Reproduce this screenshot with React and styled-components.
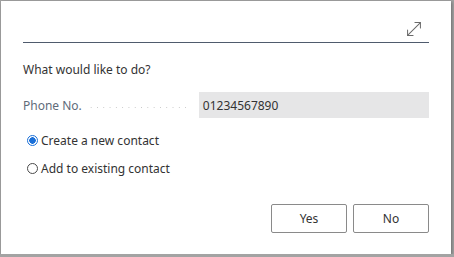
import React, { useState } from "react";
import styled, { createGlobalStyle } from "styled-components";
import { MoveDiagonal } from "lucide-react";

const GlobalStyle = createGlobalStyle`
  html, body {
    margin: 0;
    padding: 0;
    background: #a3a3a3;
    font-family: "Segoe UI", "Noto Sans", "Open Sans", sans-serif;
  }
`;

const StyledDialog = styled.div`
  box-sizing: border-box;
  margin: 1px 0 0 1px;
  width: 450px;
  height: 253px;
  background: #ffffff;
  box-shadow: 1px 1px 3px rgba(0, 0, 0, 0.35);
  padding: 0 22px 0 22px;
  display: flex;
  flex-direction: column;
`;

const StyledHeader = styled.div`
  height: 42px;
  border-bottom: 1px solid #4f5b6d;
  display: flex;
  justify-content: flex-end;
  align-items: flex-end;
  padding: 0 4px 2px 0;
  box-sizing: border-box;
  color: #6a6a6a;
`;

const StyledQuestion = styled.p`
  margin: 19px 0 0 0;
  font-size: 12px;
  line-height: 16px;
  color: #333333;
`;

const StyledField = styled.div`
  display: flex;
  align-items: center;
  margin-top: 14px;
  height: 26px;
`;

const StyledLabel = styled.span`
  font-size: 12px;
  color: #5f6b7a;
  white-space: nowrap;
`;

const StyledLeader = styled.span`
  flex: 0 0 103px;
  height: 1px;
  margin: 4px 8px 0 6px;
  background-image: radial-gradient(circle, #c8c8c8 0.6px, transparent 0.9px);
  background-size: 6.3px 1px;
  background-repeat: repeat-x;
`;

const StyledValue = styled.div`
  flex: 1;
  height: 26px;
  background: #e6e6e7;
  display: flex;
  align-items: center;
  padding-left: 4px;
  font-size: 12px;
  color: #333333;
`;

const StyledOptions = styled.div`
  display: flex;
  flex-direction: column;
  gap: 12px;
  margin-top: 14px;
  padding-left: 4px;
`;

const StyledOption = styled.label`
  display: flex;
  align-items: center;
  height: 16px;
  font-size: 12px;
  color: #333333;
  cursor: pointer;
`;

const StyledRadio = styled.span`
  box-sizing: border-box;
  width: 11px;
  height: 11px;
  border-radius: 50%;
  margin-right: 3px;
  border: 1px solid ${(p) => (p.checked ? "#1a6fd8" : "#4a4a4a")};
  background: ${(p) =>
    p.checked ? "radial-gradient(circle, #1a6fd8 3px, #ffffff 3.5px)" : "#ffffff"};
`;

const StyledFooter = styled.div`
  display: flex;
  justify-content: flex-end;
  gap: 6px;
  margin-top: 28px;
`;

const StyledButton = styled.button`
  width: 76px;
  height: 29px;
  background: #ffffff;
  border: 1px solid #8a8a8a;
  border-radius: 2px;
  font-family: inherit;
  font-size: 12px;
  color: #333333;
  cursor: pointer;
`;

export default function App() {
  const [choice, setChoice] = useState("new");

  return (
    <>
      <GlobalStyle />
      <StyledDialog>
        <StyledHeader>
          <MoveDiagonal size={22} strokeWidth={1.1} />
        </StyledHeader>
        <StyledQuestion>What would like to do?</StyledQuestion>
        <StyledField>
          <StyledLabel>Phone No.</StyledLabel>
          <StyledLeader />
          <StyledValue>01234567890</StyledValue>
        </StyledField>
        <StyledOptions>
          <StyledOption onClick={() => setChoice("new")}>
            <StyledRadio checked={choice === "new"} />
            Create a new contact
          </StyledOption>
          <StyledOption onClick={() => setChoice("existing")}>
            <StyledRadio checked={choice === "existing"} />
            Add to existing contact
          </StyledOption>
        </StyledOptions>
        <StyledFooter>
          <StyledButton>Yes</StyledButton>
          <StyledButton>No</StyledButton>
        </StyledFooter>
      </StyledDialog>
    </>
  );
}
